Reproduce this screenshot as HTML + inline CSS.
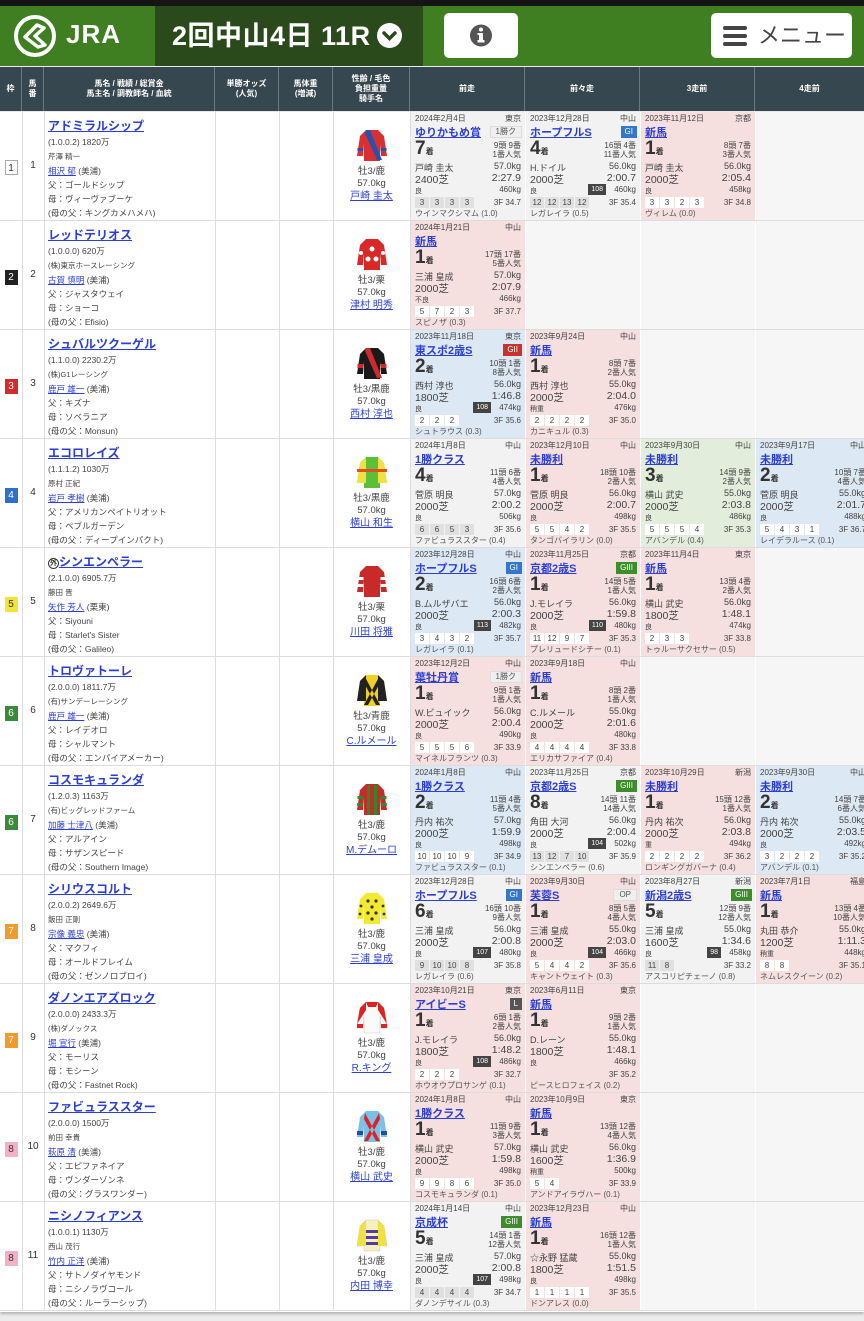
<!DOCTYPE html>
<html><head><meta charset="utf-8">
<style>
*{margin:0;padding:0;box-sizing:border-box}
body{width:864px;height:1321px;overflow:hidden;background:#ececec;font-family:"Liberation Sans","Noto Sans CJK JP",sans-serif;color:#333;position:relative}
#top{position:absolute;left:0;top:0;width:864px;height:6px;background:#151515}
#hdr{position:absolute;left:0;top:6px;width:864px;height:60px;background:#3f7e21}
#ttl{position:absolute;left:155px;top:0;width:268px;height:60px;background:#2b4a1c;color:#fff;font-size:27px;font-weight:bold;line-height:60px;padding-left:17px;letter-spacing:0.5px}
#ttl .chev{position:absolute;left:222px;top:17px;width:25px;height:25px;border-radius:50%;background:#fff;line-height:0}
#ttl .chev svg{display:block}
#logo{position:absolute;left:11px;top:8px}
#jra{position:absolute;left:66px;top:13px;color:#fff;font-size:26px;font-weight:bold;letter-spacing:1px}
.btn{position:absolute;background:#fff;border-radius:5px;top:7px;height:45px}
#info{left:444px;width:74px}
#menu{left:711px;width:141px;font-size:22px;color:#444;line-height:45px}
#thead{position:absolute;left:0;top:67px;width:864px;height:44px;background:#37474f;color:#fff;font-size:8px;font-weight:bold;text-align:center}
#thead div{position:absolute;top:0;height:44px;display:flex;align-items:center;justify-content:center;border-right:1px solid #6a7880;line-height:10px}
#body{position:absolute;left:0;top:112px;width:864px;height:1200px;background:#fff;box-shadow:0 2px 3px rgba(0,0,0,.25)}
.row{position:absolute;left:0;width:864px;height:109px;border-bottom:1px solid #ddd}
.vl{position:absolute;top:0;width:1px;height:109px;background:#ddd}
.wk{position:absolute;left:0;width:22px;top:46px;text-align:center}
.wk span{display:inline-block;width:13px;height:15px;font-size:10px;line-height:15px;text-align:center;color:#fff}
.ub{position:absolute;left:22px;width:22px;top:48px;font-size:10px;text-align:center}
.hi{position:absolute;left:48px;top:6px;width:166px;font-size:8.5px;line-height:14px;color:#444}
.hi .hn{display:block;font-size:12px;font-weight:bold;color:#2b3fd6;text-decoration:underline;line-height:16px;margin-bottom:1px}
.hi .ow{font-size:7.5px}
.hi a{color:#2b3fd6;text-decoration:underline}
.jc{position:absolute;left:333px;width:77px;top:16px;text-align:center;font-size:9.5px;line-height:12px;color:#444}
.jc svg{display:block;margin:0 auto 4px}
.jc a{color:#2b3fd6;text-decoration:underline;font-size:10px;display:block;margin-top:1px}
.r{position:absolute;top:0;width:114px;height:108px;background:#f2f2f2;font-size:8px;color:#444}
.r.p{background:#f5dfdf}.r.bl{background:#dce8f3}.r.g{background:#e2eedb}.r.e{background:#f6f6f6}
.r b{position:absolute;font-weight:normal;white-space:nowrap}
.dt{left:4px;top:1px;font-size:8px}
.vn{right:4px;top:1px;font-size:8px}
.nm{position:absolute;left:4px;top:12px;font-size:11px;font-weight:bold;color:#2b3fd6;text-decoration:underline;white-space:nowrap}
.bd{right:3px;top:14px;font-size:8px;height:12px;line-height:12px;padding:0 4px;color:#fff}
.b1{background:#3477c9}.b2{background:#c8342b}.b3{background:#3e8d2b}.bL{background:#555}.bo{background:#efefef;color:#555!important;border:1px solid #ddd;line-height:10px!important;padding:0 5px!important}
.pl{left:4px;top:26px;font-size:19px;font-weight:bold!important;color:#333}
.pl s{text-decoration:none;font-size:8px;font-weight:bold}
.hd{right:4px;top:29px;font-size:8px;line-height:9px;text-align:right}
.jk{left:4px;top:49px;font-size:9px}
.wt{right:4px;top:49px;font-size:9px}
.ds{left:4px;top:60px;font-size:10.5px}
.tm{right:4px;top:60px;font-size:10.5px}
.cd{left:4px;top:74px;font-size:7px}
.bw{right:4px;top:73px;font-size:8px}
.ix{right:34px;top:72px;font-size:7px;background:#444;color:#fff;padding:0 3px;line-height:11px}
.cn{left:4px;top:85px;font-size:8px}
.cn i{display:inline-block;font-style:normal;width:14px;height:11px;line-height:11px;text-align:center;background:#e0e0e0;margin-right:1px}
.p .cn i,.bl .cn i,.g .cn i{background:#fff}
.f3{right:4px;top:86px;font-size:8px}
.wn{left:4px;top:96px;font-size:8px;color:#555}
</style></head><body>
<div id="top"></div>
<div id="hdr">
 <svg id="logo" width="48" height="44" viewBox="0 0 48 44"><circle cx="24" cy="22" r="19" fill="none" stroke="#fff" stroke-width="4"/><path d="M14 23 L26 11 L33 14 L24 22 L34 31 L27 33 Z" fill="none" stroke="#fff" stroke-width="3.5" stroke-linejoin="round"/></svg>
 <div id="jra">JRA</div>
 <div id="ttl">2回中山4日 11R<div class="chev"><svg width="25" height="25" viewBox="0 0 25 25"><path d="M7 10 L12.5 15.5 L18 10" fill="none" stroke="#2b4a1c" stroke-width="3.5" stroke-linecap="round"/></svg></div></div>
 <div class="btn" id="info"><svg width="74" height="45" viewBox="0 0 74 45"><circle cx="37" cy="22.5" r="11" fill="#555"/><circle cx="37" cy="16.5" r="2" fill="#fff"/><rect x="35" y="20" width="4" height="9" fill="#fff"/><rect x="33.5" y="27" width="7" height="2.5" fill="#fff"/><rect x="33.5" y="20" width="3" height="2" fill="#fff"/></svg></div>
 <div class="btn" id="menu"><svg style="position:absolute;left:12px;top:12px" width="24" height="22" viewBox="0 0 24 22"><rect x="0" y="1" width="24" height="4" rx="2" fill="#444"/><rect x="0" y="9" width="24" height="4" rx="2" fill="#444"/><rect x="0" y="17" width="24" height="4" rx="2" fill="#444"/></svg><span style="position:absolute;left:47px;top:0">メニュー</span></div>
</div>
<div id="thead">
 <div style="left:0;width:22px">枠</div>
 <div style="left:22px;width:22px">馬<br>番</div>
 <div style="left:44px;width:171px">馬名 / 戦績 / 総賞金<br>馬主名 / 調教師名 / 血統</div>
 <div style="left:215px;width:64px">単勝オッズ<br>(人気)</div>
 <div style="left:279px;width:54px">馬体重<br>(増減)</div>
 <div style="left:333px;width:77px">性齢 / 毛色<br>負担重量<br>騎手名</div>
 <div style="left:410px;width:115px">前走</div>
 <div style="left:525px;width:115px">前々走</div>
 <div style="left:640px;width:115px">3走前</div>
 <div style="left:755px;width:109px;border-right:none">4走前</div>
</div>
<div id="body">

<div class="row" style="top:0">
<div class="vl" style="left:22px"></div><div class="vl" style="left:44px"></div><div class="vl" style="left:215px"></div><div class="vl" style="left:279px"></div><div class="vl" style="left:333px"></div><div class="vl" style="left:410px"></div>
<div class="wk"><span style="background:#fff;border:1px solid #aaa;color:#333">1</span></div><div class="ub">1</div>
<div class="hi"><a class="hn">アドミラルシップ</a>(1.0.0.2) 1820万<br><span class="ow">芹澤 精一</span><br><a>相沢 郁</a> (美浦)<br>父：ゴールドシップ<br>母：ヴィーヴァブーケ<br>(母の父：キングカメハメハ)</div>
<div class="jc"><svg width="32" height="34" viewBox="0 0 32 34"><path d="M10 2h12l6 6 3 20h-6l-1-12v17H8V16l-1 12H1l3-20z" fill="#d83030"/><path d="M10 2h4l12 30h-5L9 5z" fill="#2850b0"/><rect x="1.5" y="20" width="6" height="3" fill="#2850b0"/><rect x="24.5" y="20" width="6" height="3" fill="#2850b0"/></svg><p>牡3/鹿</p><p>57.0kg</p><a>戸崎 圭太</a></div>
<div class="r" style="left:411px"><b class="dt">2024年2月4日</b><b class="vn">東京</b><a class="nm">ゆりかもめ賞</a><b class="bd bo">1勝ク</b><b class="pl">7<s>着</s></b><b class="hd">9頭 9番<br>1番人気</b><b class="jk">戸崎 圭太</b><b class="wt">57.0kg</b><b class="ds">2400芝</b><b class="tm">2:27.9</b><b class="cd">良</b><b class="bw">460kg</b><b class="cn"><i>3</i><i>3</i><i>3</i><i>3</i></b><b class="f3">3F 34.7</b><b class="wn">ウインマクシマム (1.0)</b></div>
<div class="r" style="left:526px"><b class="dt">2023年12月28日</b><b class="vn">中山</b><a class="nm">ホープフルS</a><b class="bd b1">GI</b><b class="pl">4<s>着</s></b><b class="hd">16頭 4番<br>11番人気</b><b class="jk">H.ドイル</b><b class="wt">56.0kg</b><b class="ds">2000芝</b><b class="tm">2:00.7</b><b class="cd">良</b><b class="ix">108</b><b class="bw">460kg</b><b class="cn"><i>12</i><i>12</i><i>13</i><i>12</i></b><b class="f3">3F 35.4</b><b class="wn">レガレイラ (0.5)</b></div>
<div class="r p" style="left:641px"><b class="dt">2023年11月12日</b><b class="vn">京都</b><a class="nm">新馬</a><b class="pl">1<s>着</s></b><b class="hd">8頭 7番<br>3番人気</b><b class="jk">戸崎 圭太</b><b class="wt">56.0kg</b><b class="ds">2000芝</b><b class="tm">2:05.4</b><b class="cd">良</b><b class="bw">458kg</b><b class="cn"><i>3</i><i>3</i><i>2</i><i>3</i></b><b class="f3">3F 34.8</b><b class="wn">ヴィレム (0.0)</b></div>
<div class="r e" style="left:756px"></div>
</div>

<div class="row" style="top:109px">
<div class="vl" style="left:22px"></div><div class="vl" style="left:44px"></div><div class="vl" style="left:215px"></div><div class="vl" style="left:279px"></div><div class="vl" style="left:333px"></div><div class="vl" style="left:410px"></div>
<div class="wk"><span style="background:#222">2</span></div><div class="ub">2</div>
<div class="hi"><a class="hn">レッドテリオス</a>(1.0.0.0) 620万<br><span class="ow">(株)東京ホースレーシング</span><br><a>古賀 慎明</a> (美浦)<br>父：ジャスタウェイ<br>母：ショーコ<br>(母の父：Efisio)</div>
<div class="jc"><svg width="32" height="34" viewBox="0 0 32 34"><path d="M10 2h12l6 6 3 20h-6l-1-12v17H8V16l-1 12H1l3-20z" fill="#d82828"/><circle cx="16" cy="12" r="2.5" fill="#fff"/><circle cx="12" cy="22" r="2.5" fill="#fff"/><circle cx="20" cy="22" r="2.5" fill="#fff"/><circle cx="5" cy="16" r="2" fill="#fff"/><circle cx="27" cy="16" r="2" fill="#fff"/></svg><p>牡3/栗</p><p>57.0kg</p><a>津村 明秀</a></div>
<div class="r p" style="left:411px"><b class="dt">2024年1月21日</b><b class="vn">中山</b><a class="nm">新馬</a><b class="pl">1<s>着</s></b><b class="hd">17頭 17番<br>5番人気</b><b class="jk">三浦 皇成</b><b class="wt">57.0kg</b><b class="ds">2000芝</b><b class="tm">2:07.9</b><b class="cd">不良</b><b class="bw">466kg</b><b class="cn"><i>5</i><i>7</i><i>2</i><i>3</i></b><b class="f3">3F 37.7</b><b class="wn">スピノザ (0.3)</b></div>
<div class="r e" style="left:526px"></div><div class="r e" style="left:641px"></div><div class="r e" style="left:756px"></div>
</div>

<div class="row" style="top:218px">
<div class="vl" style="left:22px"></div><div class="vl" style="left:44px"></div><div class="vl" style="left:215px"></div><div class="vl" style="left:279px"></div><div class="vl" style="left:333px"></div><div class="vl" style="left:410px"></div>
<div class="wk"><span style="background:#d42a2a">3</span></div><div class="ub">3</div>
<div class="hi"><a class="hn">シュバルツクーゲル</a>(1.1.0.0) 2230.2万<br><span class="ow">(株)G1レーシング</span><br><a>鹿戸 雄一</a> (美浦)<br>父：キズナ<br>母：ソベラニア<br>(母の父：Monsun)</div>
<div class="jc"><svg width="32" height="34" viewBox="0 0 32 34"><path d="M10 2h12l6 6 3 20h-6l-1-12v17H8V16l-1 12H1l3-20z" fill="#1a1a1a"/><path d="M10 2h4l12 30h-5L9 5z" fill="#d02a2a"/><rect x="1.5" y="18" width="6" height="4" fill="#d02a2a"/><rect x="24.5" y="18" width="6" height="4" fill="#d02a2a"/></svg><p>牡3/黒鹿</p><p>57.0kg</p><a>西村 淳也</a></div>
<div class="r bl" style="left:411px"><b class="dt">2023年11月18日</b><b class="vn">東京</b><a class="nm">東スポ2歳S</a><b class="bd b2">GII</b><b class="pl">2<s>着</s></b><b class="hd">10頭 1番<br>8番人気</b><b class="jk">西村 淳也</b><b class="wt">56.0kg</b><b class="ds">1800芝</b><b class="tm">1:46.8</b><b class="cd">良</b><b class="ix">108</b><b class="bw">474kg</b><b class="cn"><i>2</i><i>2</i><i>2</i></b><b class="f3">3F 35.6</b><b class="wn">シュトラウス (0.3)</b></div>
<div class="r p" style="left:526px"><b class="dt">2023年9月24日</b><b class="vn">中山</b><a class="nm">新馬</a><b class="pl">1<s>着</s></b><b class="hd">8頭 7番<br>2番人気</b><b class="jk">西村 淳也</b><b class="wt">55.0kg</b><b class="ds">2000芝</b><b class="tm">2:04.0</b><b class="cd">稍重</b><b class="bw">476kg</b><b class="cn"><i>2</i><i>2</i><i>2</i><i>2</i></b><b class="f3">3F 35.0</b><b class="wn">カニキュル (0.3)</b></div>
<div class="r e" style="left:641px"></div><div class="r e" style="left:756px"></div>
</div>

<div class="row" style="top:327px">
<div class="vl" style="left:22px"></div><div class="vl" style="left:44px"></div><div class="vl" style="left:215px"></div><div class="vl" style="left:279px"></div><div class="vl" style="left:333px"></div><div class="vl" style="left:410px"></div>
<div class="wk"><span style="background:#2f6fcc">4</span></div><div class="ub">4</div>
<div class="hi"><a class="hn">エコロレイズ</a>(1.1.1.2) 1030万<br><span class="ow">原村 正紀</span><br><a>岩戸 孝樹</a> (美浦)<br>父：アメリカンペイトリオット<br>母：ペブルガーデン<br>(母の父：ディープインパクト)</div>
<div class="jc"><svg width="32" height="34" viewBox="0 0 32 34"><path d="M10 2h12l6 6 3 20h-6l-1-12v17H8V16l-1 12H1l3-20z" fill="#5cbf3a"/><path d="M4 8l6-6v26H1z" fill="#f0e040"/><path d="M28 8l-6-6v26h9z" fill="#f0e040"/><rect x="1" y="14" width="30" height="3" fill="#e05020"/></svg><p>牡3/黒鹿</p><p>57.0kg</p><a>横山 和生</a></div>
<div class="r" style="left:411px"><b class="dt">2024年1月8日</b><b class="vn">中山</b><a class="nm">1勝クラス</a><b class="pl">4<s>着</s></b><b class="hd">11頭 6番<br>4番人気</b><b class="jk">菅原 明良</b><b class="wt">57.0kg</b><b class="ds">2000芝</b><b class="tm">2:00.2</b><b class="cd">良</b><b class="bw">506kg</b><b class="cn"><i>6</i><i>6</i><i>5</i><i>3</i></b><b class="f3">3F 35.6</b><b class="wn">ファビュラススター (0.4)</b></div>
<div class="r p" style="left:526px"><b class="dt">2023年12月10日</b><b class="vn">中山</b><a class="nm">未勝利</a><b class="pl">1<s>着</s></b><b class="hd">18頭 10番<br>2番人気</b><b class="jk">菅原 明良</b><b class="wt">56.0kg</b><b class="ds">2000芝</b><b class="tm">2:00.7</b><b class="cd">良</b><b class="bw">498kg</b><b class="cn"><i>5</i><i>5</i><i>4</i><i>2</i></b><b class="f3">3F 35.5</b><b class="wn">タンゴバイラリン (0.0)</b></div>
<div class="r g" style="left:641px"><b class="dt">2023年9月30日</b><b class="vn">中山</b><a class="nm">未勝利</a><b class="pl">3<s>着</s></b><b class="hd">14頭 9番<br>2番人気</b><b class="jk">横山 武史</b><b class="wt">55.0kg</b><b class="ds">2000芝</b><b class="tm">2:03.8</b><b class="cd">良</b><b class="bw">486kg</b><b class="cn"><i>5</i><i>5</i><i>5</i><i>4</i></b><b class="f3">3F 35.3</b><b class="wn">アバンデル (0.4)</b></div>
<div class="r bl" style="left:756px"><b class="dt">2023年9月17日</b><b class="vn">中山</b><a class="nm">未勝利</a><b class="pl">2<s>着</s></b><b class="hd">10頭 7番<br>4番人気</b><b class="jk">菅原 明良</b><b class="wt">55.0kg</b><b class="ds">2000芝</b><b class="tm">2:01.7</b><b class="cd">良</b><b class="bw">488kg</b><b class="cn"><i>5</i><i>4</i><i>3</i><i>1</i></b><b class="f3">3F 36.7</b><b class="wn">レイデラルース (0.1)</b></div>
</div>

<div class="row" style="top:436px">
<div class="vl" style="left:22px"></div><div class="vl" style="left:44px"></div><div class="vl" style="left:215px"></div><div class="vl" style="left:279px"></div><div class="vl" style="left:333px"></div><div class="vl" style="left:410px"></div>
<div class="wk"><span style="background:#f3e43a;color:#333">5</span></div><div class="ub">5</div>
<div class="hi"><a class="hn"><span style="display:inline-block;width:11px;height:11px;border:1px solid #333;border-radius:50%;font-size:7px;line-height:9px;text-align:center;color:#333;text-decoration:none;vertical-align:1px">外</span>シンエンペラー</a>(2.1.0.0) 6905.7万<br><span class="ow">藤田 晋</span><br><a>矢作 芳人</a> (栗東)<br>父：Siyouni<br>母：Starlet's Sister<br>(母の父：Galileo)</div>
<div class="jc"><svg width="32" height="34" viewBox="0 0 32 34"><path d="M10 2h12l6 6 3 20h-6l-1-12v17H8V16l-1 12H1l3-20z" fill="#c82a2a"/><rect x="1.5" y="13" width="6" height="3" fill="#fff"/><rect x="24.5" y="13" width="6" height="3" fill="#fff"/><rect x="1.2" y="20" width="6" height="3" fill="#fff"/><rect x="24.8" y="20" width="6" height="3" fill="#fff"/></svg><p>牡3/栗</p><p>57.0kg</p><a>川田 将雅</a></div>
<div class="r bl" style="left:411px"><b class="dt">2023年12月28日</b><b class="vn">中山</b><a class="nm">ホープフルS</a><b class="bd b1">GI</b><b class="pl">2<s>着</s></b><b class="hd">16頭 6番<br>2番人気</b><b class="jk">B.ムルザバエ</b><b class="wt">56.0kg</b><b class="ds">2000芝</b><b class="tm">2:00.3</b><b class="cd">良</b><b class="ix">113</b><b class="bw">482kg</b><b class="cn"><i>3</i><i>4</i><i>3</i><i>2</i></b><b class="f3">3F 35.7</b><b class="wn">レガレイラ (0.1)</b></div>
<div class="r p" style="left:526px"><b class="dt">2023年11月25日</b><b class="vn">京都</b><a class="nm">京都2歳S</a><b class="bd b3">GIII</b><b class="pl">1<s>着</s></b><b class="hd">14頭 5番<br>1番人気</b><b class="jk">J.モレイラ</b><b class="wt">56.0kg</b><b class="ds">2000芝</b><b class="tm">1:59.8</b><b class="cd">良</b><b class="ix">110</b><b class="bw">480kg</b><b class="cn"><i>11</i><i>12</i><i>9</i><i>7</i></b><b class="f3">3F 35.3</b><b class="wn">プレリュードシチー (0.1)</b></div>
<div class="r p" style="left:641px"><b class="dt">2023年11月4日</b><b class="vn">東京</b><a class="nm">新馬</a><b class="pl">1<s>着</s></b><b class="hd">13頭 4番<br>2番人気</b><b class="jk">横山 武史</b><b class="wt">56.0kg</b><b class="ds">1800芝</b><b class="tm">1:48.1</b><b class="cd">良</b><b class="bw">474kg</b><b class="cn"><i>2</i><i>3</i><i>3</i></b><b class="f3">3F 33.8</b><b class="wn">トゥルーサクセサー (0.5)</b></div>
<div class="r e" style="left:756px"></div>
</div>

<div class="row" style="top:545px">
<div class="vl" style="left:22px"></div><div class="vl" style="left:44px"></div><div class="vl" style="left:215px"></div><div class="vl" style="left:279px"></div><div class="vl" style="left:333px"></div><div class="vl" style="left:410px"></div>
<div class="wk"><span style="background:#3a8a3a">6</span></div><div class="ub">6</div>
<div class="hi"><a class="hn">トロヴァトーレ</a>(2.0.0.0) 1811.7万<br><span class="ow">(有)サンデーレーシング</span><br><a>鹿戸 雄一</a> (美浦)<br>父：レイデオロ<br>母：シャルマント<br>(母の父：エンパイアメーカー)</div>
<div class="jc"><svg width="32" height="34" viewBox="0 0 32 34"><path d="M10 2h12l6 6 3 20h-6l-1-12v17H8V16l-1 12H1l3-20z" fill="#f0d020"/><path d="M9 4l15 28h-4L8 10z M23 4L8 32h4L24 10z" fill="#222"/><path d="M4 8l6-6v26H1z M28 8l-6-6v26h9z" fill="#222"/></svg><p>牡3/青鹿</p><p>57.0kg</p><a>C.ルメール</a></div>
<div class="r p" style="left:411px"><b class="dt">2023年12月2日</b><b class="vn">中山</b><a class="nm">葉牡丹賞</a><b class="bd bo">1勝ク</b><b class="pl">1<s>着</s></b><b class="hd">9頭 1番<br>1番人気</b><b class="jk">W.ビュイック</b><b class="wt">56.0kg</b><b class="ds">2000芝</b><b class="tm">2:00.4</b><b class="cd">良</b><b class="bw">490kg</b><b class="cn"><i>5</i><i>5</i><i>5</i><i>6</i></b><b class="f3">3F 33.9</b><b class="wn">マイネルフランツ (0.3)</b></div>
<div class="r p" style="left:526px"><b class="dt">2023年9月18日</b><b class="vn">中山</b><a class="nm">新馬</a><b class="pl">1<s>着</s></b><b class="hd">8頭 2番<br>1番人気</b><b class="jk">C.ルメール</b><b class="wt">55.0kg</b><b class="ds">2000芝</b><b class="tm">2:01.6</b><b class="cd">良</b><b class="bw">480kg</b><b class="cn"><i>4</i><i>4</i><i>4</i><i>4</i></b><b class="f3">3F 33.8</b><b class="wn">エリカサファイア (0.4)</b></div>
<div class="r e" style="left:641px"></div><div class="r e" style="left:756px"></div>
</div>

<div class="row" style="top:654px">
<div class="vl" style="left:22px"></div><div class="vl" style="left:44px"></div><div class="vl" style="left:215px"></div><div class="vl" style="left:279px"></div><div class="vl" style="left:333px"></div><div class="vl" style="left:410px"></div>
<div class="wk"><span style="background:#3a8a3a">6</span></div><div class="ub">7</div>
<div class="hi"><a class="hn">コスモキュランダ</a>(1.2.0.3) 1163万<br><span class="ow">(有)ビッグレッドファーム</span><br><a>加藤 士津八</a> (美浦)<br>父：アルアイン<br>母：サザンスピード<br>(母の父：Southern Image)</div>
<div class="jc"><svg width="32" height="34" viewBox="0 0 32 34"><path d="M10 2h12l6 6 3 20h-6l-1-12v17H8V16l-1 12H1l3-20z" fill="#c82a2a"/><rect x="11" y="3" width="3" height="30" fill="#2a8a2a"/><rect x="18" y="3" width="3" height="30" fill="#2a8a2a"/><rect x="1.5" y="14" width="6" height="3" fill="#2a8a2a"/><rect x="24.5" y="14" width="6" height="3" fill="#2a8a2a"/><rect x="1.2" y="21" width="6" height="3" fill="#2a8a2a"/><rect x="24.8" y="21" width="6" height="3" fill="#2a8a2a"/></svg><p>牡3/鹿</p><p>57.0kg</p><a>M.デムーロ</a></div>
<div class="r bl" style="left:411px"><b class="dt">2024年1月8日</b><b class="vn">中山</b><a class="nm">1勝クラス</a><b class="pl">2<s>着</s></b><b class="hd">11頭 4番<br>5番人気</b><b class="jk">丹内 祐次</b><b class="wt">57.0kg</b><b class="ds">2000芝</b><b class="tm">1:59.9</b><b class="cd">良</b><b class="bw">498kg</b><b class="cn"><i>10</i><i>10</i><i>10</i><i>9</i></b><b class="f3">3F 34.9</b><b class="wn">ファビュラススター (0.1)</b></div>
<div class="r" style="left:526px"><b class="dt">2023年11月25日</b><b class="vn">京都</b><a class="nm">京都2歳S</a><b class="bd b3">GIII</b><b class="pl">8<s>着</s></b><b class="hd">14頭 11番<br>14番人気</b><b class="jk">角田 大河</b><b class="wt">56.0kg</b><b class="ds">2000芝</b><b class="tm">2:00.4</b><b class="cd">良</b><b class="ix">104</b><b class="bw">502kg</b><b class="cn"><i>13</i><i>12</i><i>7</i><i>10</i></b><b class="f3">3F 35.9</b><b class="wn">シンエンペラー (0.6)</b></div>
<div class="r p" style="left:641px"><b class="dt">2023年10月29日</b><b class="vn">新潟</b><a class="nm">未勝利</a><b class="pl">1<s>着</s></b><b class="hd">15頭 12番<br>1番人気</b><b class="jk">丹内 祐次</b><b class="wt">56.0kg</b><b class="ds">2000芝</b><b class="tm">2:03.8</b><b class="cd">重</b><b class="bw">494kg</b><b class="cn"><i>2</i><i>2</i><i>2</i><i>2</i></b><b class="f3">3F 36.2</b><b class="wn">ロンギングガバーナ (0.4)</b></div>
<div class="r bl" style="left:756px"><b class="dt">2023年9月30日</b><b class="vn">中山</b><a class="nm">未勝利</a><b class="pl">2<s>着</s></b><b class="hd">14頭 7番<br>6番人気</b><b class="jk">丹内 祐次</b><b class="wt">55.0kg</b><b class="ds">2000芝</b><b class="tm">2:03.5</b><b class="cd">良</b><b class="bw">492kg</b><b class="cn"><i>3</i><i>2</i><i>2</i><i>2</i></b><b class="f3">3F 35.2</b><b class="wn">アバンデル (0.1)</b></div>
</div>

<div class="row" style="top:763px">
<div class="vl" style="left:22px"></div><div class="vl" style="left:44px"></div><div class="vl" style="left:215px"></div><div class="vl" style="left:279px"></div><div class="vl" style="left:333px"></div><div class="vl" style="left:410px"></div>
<div class="wk"><span style="background:#f39a2b">7</span></div><div class="ub">8</div>
<div class="hi"><a class="hn">シリウスコルト</a>(2.0.0.2) 2649.6万<br><span class="ow">飯田 正剛</span><br><a>宗像 義忠</a> (美浦)<br>父：マクフィ<br>母：オールドフレイム<br>(母の父：ゼンノロブロイ)</div>
<div class="jc"><svg width="32" height="34" viewBox="0 0 32 34"><path d="M10 2h12l6 6 3 20h-6l-1-12v17H8V16l-1 12H1l3-20z" fill="#f2ea30"/><circle cx="12" cy="10" r="1.6" fill="#333"/><circle cx="20" cy="10" r="1.6" fill="#333"/><circle cx="16" cy="16" r="1.6" fill="#333"/><circle cx="12" cy="22" r="1.6" fill="#333"/><circle cx="20" cy="22" r="1.6" fill="#333"/><circle cx="16" cy="28" r="1.6" fill="#333"/><circle cx="5" cy="15" r="1.4" fill="#333"/><circle cx="27" cy="15" r="1.4" fill="#333"/><circle cx="4" cy="23" r="1.4" fill="#333"/><circle cx="28" cy="23" r="1.4" fill="#333"/></svg><p>牡3/鹿</p><p>57.0kg</p><a>三浦 皇成</a></div>
<div class="r" style="left:411px"><b class="dt">2023年12月28日</b><b class="vn">中山</b><a class="nm">ホープフルS</a><b class="bd b1">GI</b><b class="pl">6<s>着</s></b><b class="hd">16頭 10番<br>9番人気</b><b class="jk">三浦 皇成</b><b class="wt">56.0kg</b><b class="ds">2000芝</b><b class="tm">2:00.8</b><b class="cd">良</b><b class="ix">107</b><b class="bw">480kg</b><b class="cn"><i>9</i><i>10</i><i>10</i><i>8</i></b><b class="f3">3F 35.8</b><b class="wn">レガレイラ (0.6)</b></div>
<div class="r p" style="left:526px"><b class="dt">2023年9月30日</b><b class="vn">中山</b><a class="nm">芙蓉S</a><b class="bd bo">OP</b><b class="pl">1<s>着</s></b><b class="hd">8頭 5番<br>4番人気</b><b class="jk">三浦 皇成</b><b class="wt">55.0kg</b><b class="ds">2000芝</b><b class="tm">2:03.0</b><b class="cd">良</b><b class="ix">104</b><b class="bw">466kg</b><b class="cn"><i>5</i><i>4</i><i>4</i><i>2</i></b><b class="f3">3F 35.6</b><b class="wn">キャントウェイト (0.3)</b></div>
<div class="r" style="left:641px"><b class="dt">2023年8月27日</b><b class="vn">新潟</b><a class="nm">新潟2歳S</a><b class="bd b3">GIII</b><b class="pl">5<s>着</s></b><b class="hd">12頭 9番<br>12番人気</b><b class="jk">三浦 皇成</b><b class="wt">55.0kg</b><b class="ds">1600芝</b><b class="tm">1:34.6</b><b class="cd">良</b><b class="ix">98</b><b class="bw">458kg</b><b class="cn"><i>11</i><i>8</i></b><b class="f3">3F 33.2</b><b class="wn">アスコリピチェーノ (0.8)</b></div>
<div class="r p" style="left:756px"><b class="dt">2023年7月1日</b><b class="vn">福島</b><a class="nm">新馬</a><b class="pl">1<s>着</s></b><b class="hd">13頭 4番<br>10番人気</b><b class="jk">丸田 恭介</b><b class="wt">55.0kg</b><b class="ds">1200芝</b><b class="tm">1:11.3</b><b class="cd">稍重</b><b class="bw">448kg</b><b class="cn"><i>8</i><i>8</i></b><b class="f3">3F 35.1</b><b class="wn">ネムレスクイーン (0.2)</b></div>
</div>

<div class="row" style="top:872px">
<div class="vl" style="left:22px"></div><div class="vl" style="left:44px"></div><div class="vl" style="left:215px"></div><div class="vl" style="left:279px"></div><div class="vl" style="left:333px"></div><div class="vl" style="left:410px"></div>
<div class="wk"><span style="background:#f39a2b">7</span></div><div class="ub">9</div>
<div class="hi"><a class="hn">ダノンエアズロック</a>(2.0.0.0) 2433.3万<br><span class="ow">(株)ダノックス</span><br><a>堀 宣行</a> (美浦)<br>父：モーリス<br>母：モシーン<br>(母の父：Fastnet Rock)</div>
<div class="jc"><svg width="32" height="34" viewBox="0 0 32 34"><path d="M10 2h12l6 6 3 20h-6l-1-12v17H8V16l-1 12H1l3-20z" fill="#fafafa" stroke="#ccc" stroke-width=".6"/><path d="M10 2h12l-2 5h-8z" fill="#d22"/><path d="M4 8l6-6v8L1 24z M28 8l-6-6v8l9 14z" fill="#d22"/><rect x="1" y="24" width="6" height="4" fill="#d22"/><rect x="25" y="24" width="6" height="4" fill="#d22"/></svg><p>牡3/鹿</p><p>57.0kg</p><a>R.キング</a></div>
<div class="r p" style="left:411px"><b class="dt">2023年10月21日</b><b class="vn">東京</b><a class="nm">アイビーS</a><b class="bd bL">L</b><b class="pl">1<s>着</s></b><b class="hd">6頭 1番<br>2番人気</b><b class="jk">J.モレイラ</b><b class="wt">56.0kg</b><b class="ds">1800芝</b><b class="tm">1:48.2</b><b class="cd">良</b><b class="ix">108</b><b class="bw">486kg</b><b class="cn"><i>2</i><i>2</i><i>2</i></b><b class="f3">3F 32.7</b><b class="wn">ホウオウプロサンゲ (0.1)</b></div>
<div class="r p" style="left:526px"><b class="dt">2023年6月11日</b><b class="vn">東京</b><a class="nm">新馬</a><b class="pl">1<s>着</s></b><b class="hd">9頭 2番<br>1番人気</b><b class="jk">D.レーン</b><b class="wt">55.0kg</b><b class="ds">1800芝</b><b class="tm">1:48.1</b><b class="cd">良</b><b class="bw">466kg</b><b class="f3">3F 35.2</b><b class="wn">ピースヒロフェイス (0.2)</b></div>
<div class="r e" style="left:641px"></div><div class="r e" style="left:756px"></div>
</div>

<div class="row" style="top:981px">
<div class="vl" style="left:22px"></div><div class="vl" style="left:44px"></div><div class="vl" style="left:215px"></div><div class="vl" style="left:279px"></div><div class="vl" style="left:333px"></div><div class="vl" style="left:410px"></div>
<div class="wk"><span style="background:#f5b0c5;color:#333">8</span></div><div class="ub">10</div>
<div class="hi"><a class="hn">ファビュラススター</a>(2.0.0.0) 1500万<br><span class="ow">前田 幸貴</span><br><a>萩原 清</a> (美浦)<br>父：エピファネイア<br>母：ヴンダーゾンネ<br>(母の父：グラスワンダー)</div>
<div class="jc"><svg width="32" height="34" viewBox="0 0 32 34"><path d="M10 2h12l6 6 3 20h-6l-1-12v17H8V16l-1 12H1l3-20z" fill="#7cc0e8"/><path d="M9 4l15 28h-4L8 10z M23 4L8 32h4L24 10z" fill="#d22"/><rect x="1" y="22" width="6" height="4" fill="#2a4aa0"/><rect x="25" y="22" width="6" height="4" fill="#2a4aa0"/></svg><p>牡3/鹿</p><p>57.0kg</p><a>横山 武史</a></div>
<div class="r p" style="left:411px"><b class="dt">2024年1月8日</b><b class="vn">中山</b><a class="nm">1勝クラス</a><b class="pl">1<s>着</s></b><b class="hd">11頭 9番<br>3番人気</b><b class="jk">横山 武史</b><b class="wt">57.0kg</b><b class="ds">2000芝</b><b class="tm">1:59.8</b><b class="cd">良</b><b class="bw">498kg</b><b class="cn"><i>9</i><i>9</i><i>8</i><i>6</i></b><b class="f3">3F 35.0</b><b class="wn">コスモキュランダ (0.1)</b></div>
<div class="r p" style="left:526px"><b class="dt">2023年10月9日</b><b class="vn">東京</b><a class="nm">新馬</a><b class="pl">1<s>着</s></b><b class="hd">13頭 12番<br>4番人気</b><b class="jk">横山 武史</b><b class="wt">56.0kg</b><b class="ds">1600芝</b><b class="tm">1:36.9</b><b class="cd">稍重</b><b class="bw">500kg</b><b class="cn"><i>5</i><i>4</i></b><b class="f3">3F 33.9</b><b class="wn">アンドアイラヴハー (0.1)</b></div>
<div class="r e" style="left:641px"></div><div class="r e" style="left:756px"></div>
</div>

<div class="row" style="top:1090px">
<div class="vl" style="left:22px"></div><div class="vl" style="left:44px"></div><div class="vl" style="left:215px"></div><div class="vl" style="left:279px"></div><div class="vl" style="left:333px"></div><div class="vl" style="left:410px"></div>
<div class="wk"><span style="background:#f5b0c5;color:#333">8</span></div><div class="ub">11</div>
<div class="hi"><a class="hn">ニシノフィアンス</a>(1.0.0.1) 1130万<br><span class="ow">西山 茂行</span><br><a>竹内 正洋</a> (美浦)<br>父：サトノダイヤモンド<br>母：ニシノラヴコール<br>(母の父：ルーラーシップ)</div>
<div class="jc"><svg width="32" height="34" viewBox="0 0 32 34"><path d="M10 2h12l6 6 3 20h-6l-1-12v17H8V16l-1 12H1l3-20z" fill="#f5f0c0" stroke="#ccc" stroke-width=".6"/><rect x="8" y="12" width="16" height="3" fill="#5a3a9a"/><rect x="8" y="18" width="16" height="3" fill="#5a3a9a"/><rect x="8" y="24" width="16" height="3" fill="#5a3a9a"/><path d="M4 8l6-6v26H1z M28 8l-6-6v26h9z" fill="#f0e040"/></svg><p>牡3/鹿</p><p>57.0kg</p><a>内田 博幸</a></div>
<div class="r" style="left:411px"><b class="dt">2024年1月14日</b><b class="vn">中山</b><a class="nm">京成杯</a><b class="bd b3">GIII</b><b class="pl">5<s>着</s></b><b class="hd">14頭 1番<br>12番人気</b><b class="jk">三浦 皇成</b><b class="wt">57.0kg</b><b class="ds">2000芝</b><b class="tm">2:00.8</b><b class="cd">良</b><b class="ix">107</b><b class="bw">498kg</b><b class="cn"><i>4</i><i>4</i><i>4</i><i>4</i></b><b class="f3">3F 34.7</b><b class="wn">ダノンデサイル (0.3)</b></div>
<div class="r p" style="left:526px"><b class="dt">2023年12月23日</b><b class="vn">中山</b><a class="nm">新馬</a><b class="pl">1<s>着</s></b><b class="hd">16頭 12番<br>1番人気</b><b class="jk">☆永野 猛蔵</b><b class="wt">55.0kg</b><b class="ds">1800芝</b><b class="tm">1:51.5</b><b class="cd">良</b><b class="bw">498kg</b><b class="cn"><i>1</i><i>1</i><i>1</i><i>1</i></b><b class="f3">3F 35.5</b><b class="wn">ドンアレス (0.0)</b></div>
<div class="r e" style="left:641px"></div><div class="r e" style="left:756px"></div>
</div>

</div>
</body></html>
